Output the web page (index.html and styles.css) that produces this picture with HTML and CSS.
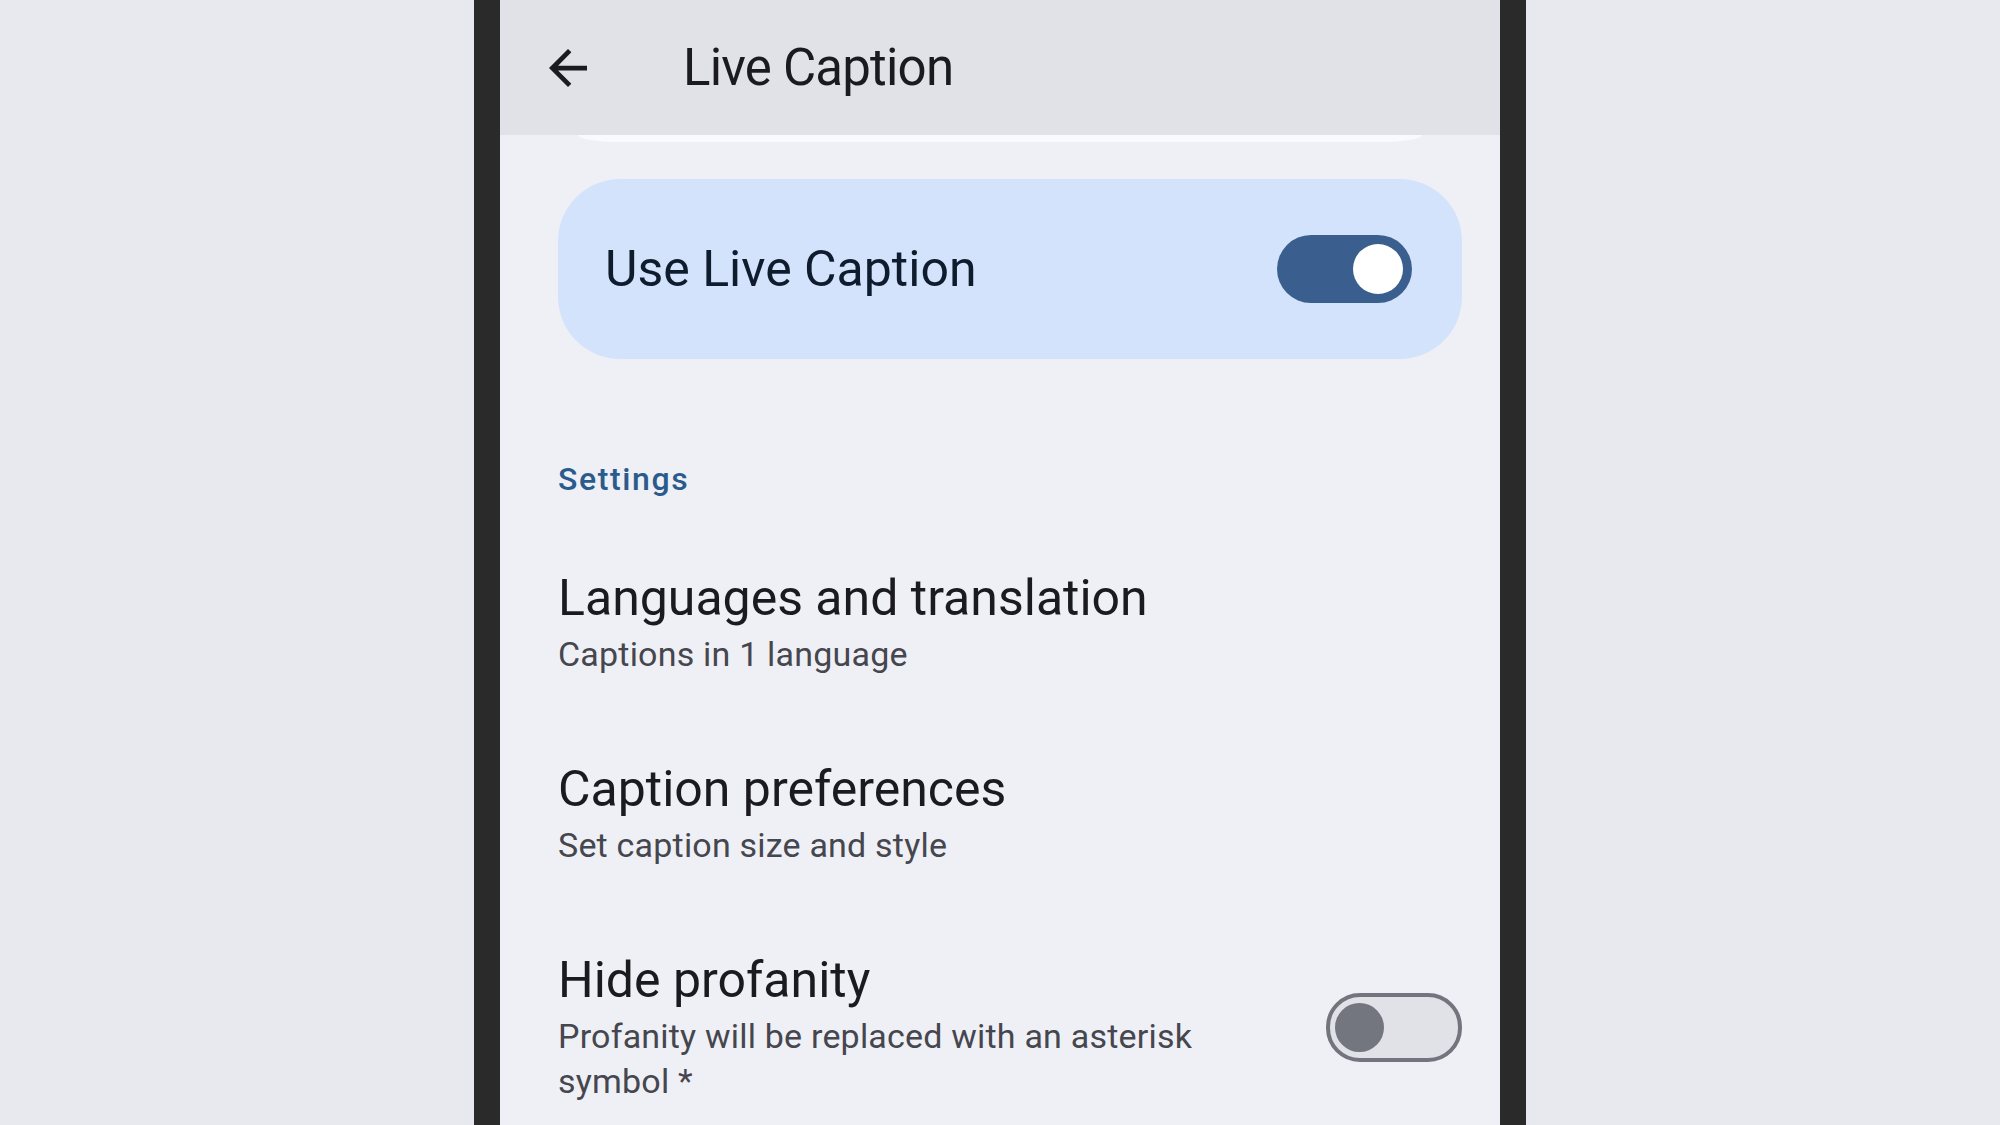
FILE: index.html
```html
<!DOCTYPE html>
<html lang="en">
<head>
    <meta charset="UTF-8">
    <meta name="viewport" content="width=device-width, initial-scale=1.0">
    <title>Live Caption</title>
    <link rel="stylesheet" href="styles.css">
</head>
<body>
    <div class="phone">
        <div class="screen">
            <header class="topbar">
                <button class="back" aria-label="Back">
                    <svg viewBox="4 4 16 16" width="38" height="38">
                        <path d="M20 11H7.83l5.59-5.59L12 4l-8 8 8 8 1.41-1.41L7.83 13H20v-2z" fill="currentColor"/>
                    </svg>
                </button>
                <h1>Live Caption</h1>
            </header>
            <div class="peek"></div>

            <main class="content">
                <div class="main-switch">
                    <span>Use Live Caption</span>
                    <span class="switch on"><span class="thumb"></span></span>
                </div>

                <h2 class="section">Settings</h2>

                <ul class="prefs">
                    <li class="pref">
                        <div class="pref-text">
                            <div class="pref-title">Languages and translation</div>
                            <div class="pref-sub">Captions in 1 language</div>
                        </div>
                    </li>
                    <li class="pref">
                        <div class="pref-text">
                            <div class="pref-title">Caption preferences</div>
                            <div class="pref-sub">Set caption size and style</div>
                        </div>
                    </li>
                    <li class="pref">
                        <div class="pref-text">
                            <div class="pref-title">Hide profanity</div>
                            <div class="pref-sub">Profanity will be replaced with an asterisk symbol *</div>
                        </div>
                        <span class="switch off"><span class="thumb"></span></span>
                    </li>
                </ul>
            </main>
        </div>
    </div>
</body>
</html>
```

FILE: styles.css
```css
* {
    margin: 0;
    padding: 0;
    box-sizing: border-box;
}

body {
    font-family: Roboto, "Noto Sans", sans-serif;
    background: #e8e9ee;
    width: 2000px;
    height: 1125px;
    overflow: hidden;
    display: flex;
    justify-content: center;
}

.phone {
    width: 1052px;
    height: 1125px;
    border-left: 26px solid #2a2a2b;
    border-right: 26px solid #2a2a2b;
}

.screen {
    height: 100%;
    background: #eff0f5;
    overflow: hidden;
}

/* top app bar */
.topbar {
    height: 135px;
    background: #e1e2e7;
    display: flex;
    align-items: center;
    padding-left: 49px;
    position: relative;
    z-index: 1;
}

.back {
    border: none;
    background: none;
    color: #1b1b1f;
    display: flex;
    width: 38px;
    height: 38px;
    margin-right: 96px;
}

.topbar h1 {
    font-size: 51px;
    font-weight: 400;
    line-height: 1;
    letter-spacing: -0.8px;
    color: #1b1b1f;
}

/* bottom edge of the card scrolled under the bar */
.peek {
    height: 7px;
    margin: 0 78px;
    background: #f9fafd;
    border-radius: 0 0 40px 40px / 0 0 7px 7px;
}

.content {
    padding: 37px 38px 0 58px;
}

.main-switch {
    height: 180px;
    background: #d4e3fc;
    border-radius: 62px;
    display: flex;
    align-items: center;
    justify-content: space-between;
    padding: 0 50px 0 47px;
    font-size: 50px;
    color: #0f1c2e;
}

/* switches */
.switch {
    display: flex;
    align-items: center;
    border-radius: 34px;
    flex-shrink: 0;
}

.switch.on {
    width: 135px;
    height: 68px;
    background: #3a5f8e;
    justify-content: flex-end;
    padding: 0 9px;
}

.switch.on .thumb {
    width: 50px;
    height: 50px;
    border-radius: 50%;
    background: #fff;
}

.switch.off {
    width: 136px;
    height: 69px;
    background: #e1e2e8;
    border: 4px solid #72757d;
    padding: 0 5px;
}

.switch.off .thumb {
    width: 49px;
    height: 49px;
    border-radius: 50%;
    background: #73767e;
}

.section {
    margin-top: 100px;
    font-size: 32px;
    font-weight: 500;
    line-height: 40px;
    letter-spacing: 1.6px;
    color: #2b5a8c;
}

.prefs {
    list-style: none;
    margin-top: 27px;
}

.pref {
    display: flex;
    align-items: center;
    justify-content: space-between;
    padding: 42px 0 40px;
}

.pref-text {
    max-width: 680px;
}

.pref-title {
    font-size: 50px;
    line-height: 60px;
    color: #1b1b1f;
}

.pref-sub {
    margin-top: 4px;
    font-size: 34px;
    line-height: 45px;
    letter-spacing: 0.2px;
    color: #45464e;
}
```
